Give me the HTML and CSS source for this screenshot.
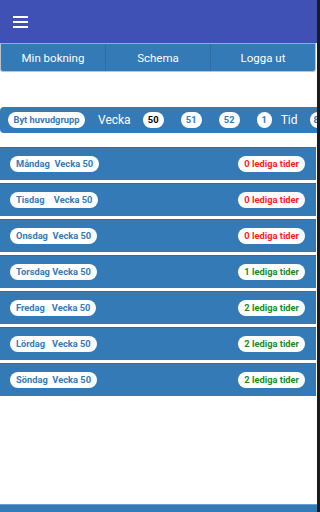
FILE: index.html
```html
<!DOCTYPE html>
<html>
<head>
<meta charset="utf-8">
<link rel="stylesheet" href="styles.css">
</head>
<body>
<div class="page">
  <header class="topbar">
    <div class="burger"><span></span><span></span><span></span></div>
  </header>
  <nav class="tabs">
    <div class="tab">Min bokning</div>
    <div class="tab">Schema</div>
    <div class="tab">Logga ut</div>
  </nav>
  <div class="weekbar">
    <span class="pill wide">Byt huvudgrupp</span>
    <span class="label">Vecka</span>
    <span class="pill num active">50</span>
    <span class="pill num">51</span>
    <span class="pill num">52</span>
    <span class="pill num small">1</span>
    <span class="label tid">Tid</span>
    <span class="pill num last">8:</span>
  </div>
  <div class="days">
    <div class="day"><span class="pill dayname">Måndag&nbsp; Vecka 50</span><span class="pill count none">0 lediga tider</span></div>
    <div class="day"><span class="pill dayname">Tisdag&nbsp;&nbsp;&nbsp; Vecka 50</span><span class="pill count none">0 lediga tider</span></div>
    <div class="day"><span class="pill dayname">Onsdag&nbsp; Vecka 50</span><span class="pill count none">0 lediga tider</span></div>
    <div class="day"><span class="pill dayname">Torsdag Vecka 50</span><span class="pill count some">1 lediga tider</span></div>
    <div class="day"><span class="pill dayname">Fredag&nbsp;&nbsp; Vecka 50</span><span class="pill count some">2 lediga tider</span></div>
    <div class="day"><span class="pill dayname">Lördag&nbsp;&nbsp; Vecka 50</span><span class="pill count some">2 lediga tider</span></div>
    <div class="day"><span class="pill dayname">Söndag&nbsp; Vecka 50</span><span class="pill count some">2 lediga tider</span></div>
  </div>
  <div class="spacer"></div>
  <footer class="bottombar"></footer>
</div>
</body>
</html>
```

FILE: styles.css
```css
html, body {
  margin: 0;
  padding: 0;
  height: 100%;
  background: #1c1c1c;
  overflow: hidden;
}
.page {
  width: 317px;
  height: 512px;
  background: #ffffff;
  display: flex;
  flex-direction: column;
  font-family: Roboto, "Liberation Sans", sans-serif;
}
.topbar {
  height: 43px;
  background: #3f51b5;
  display: flex;
  align-items: center;
  padding-left: 13px;
  flex-shrink: 0;
}
.burger {
  display: flex;
  flex-direction: column;
  gap: 3px;
  margin-top: 1px;
}
.burger span {
  display: block;
  width: 15px;
  height: 2px;
  background: #ffffff;
}
.tabs {
  display: flex;
  height: 27px;
  background: #337ab7;
  border: 1px solid #b9c3cf;
  border-top-color: #a9a9b5;
  border-radius: 0 0 3px 3px;
  width: 314px;
  flex-shrink: 0;
}
.tab {
  flex: 1;
  display: flex;
  align-items: center;
  justify-content: center;
  color: #ffffff;
  font-size: 11.5px;
  border-left: 1px solid #2e6da4;
}
.tab:first-child {
  border-left: none;
}
.weekbar {
  margin-top: 35px;
  height: 26px;
  background: #337ab7;
  border-radius: 4px 0 0 4px;
  display: flex;
  align-items: center;
  padding-left: 8px;
  overflow: hidden;
  white-space: nowrap;
  flex-shrink: 0;
}
.pill {
  background: #ffffff;
  border-radius: 8px;
  height: 16px;
  line-height: 16px;
  font-size: 9.3px;
  font-weight: bold;
  color: #337ab7;
  padding: 0 5px;
  flex-shrink: 0;
  box-sizing: border-box;
}
.wide {
  width: 77px;
  text-align: center;
  padding: 0;
}
.label {
  color: #ffffff;
  font-size: 12px;
  margin-left: 13px;
  flex-shrink: 0;
}
.num {
  width: 21px;
  text-align: center;
  padding: 0;
  margin-left: 17px;
}
.weekbar .label + .num {
  margin-left: 12px;
}
.active {
  color: #000000;
}
.small {
  width: 15px;
}
.tid {
  margin-left: 9px;
}
.weekbar .last {
  margin-left: 6px;
  text-align: left;
  padding-left: 4px;
  width: 14px;
  border-radius: 8px 0 0 8px;
}
.days {
  margin-top: 14px;
  display: flex;
  flex-direction: column;
  gap: 3px;
}
.day {
  height: 33px;
  background: #337ab7;
  border-top: 1px solid #2c6eaa;
  box-sizing: border-box;
  display: flex;
  align-items: center;
  justify-content: space-between;
  padding: 0 11px 0 10px;
  width: 316px;
}
.dayname {
  padding: 0 6px;
}
.count {
  padding: 0 6px;
}
.none {
  color: #ff1a1a;
}
.some {
  color: #1b8a1b;
}
.spacer {
  flex: 1;
}
.bottombar {
  height: 7px;
  background: #337ab7;
  border-top: 1px solid #6a9fd0;
  flex-shrink: 0;
}
```
